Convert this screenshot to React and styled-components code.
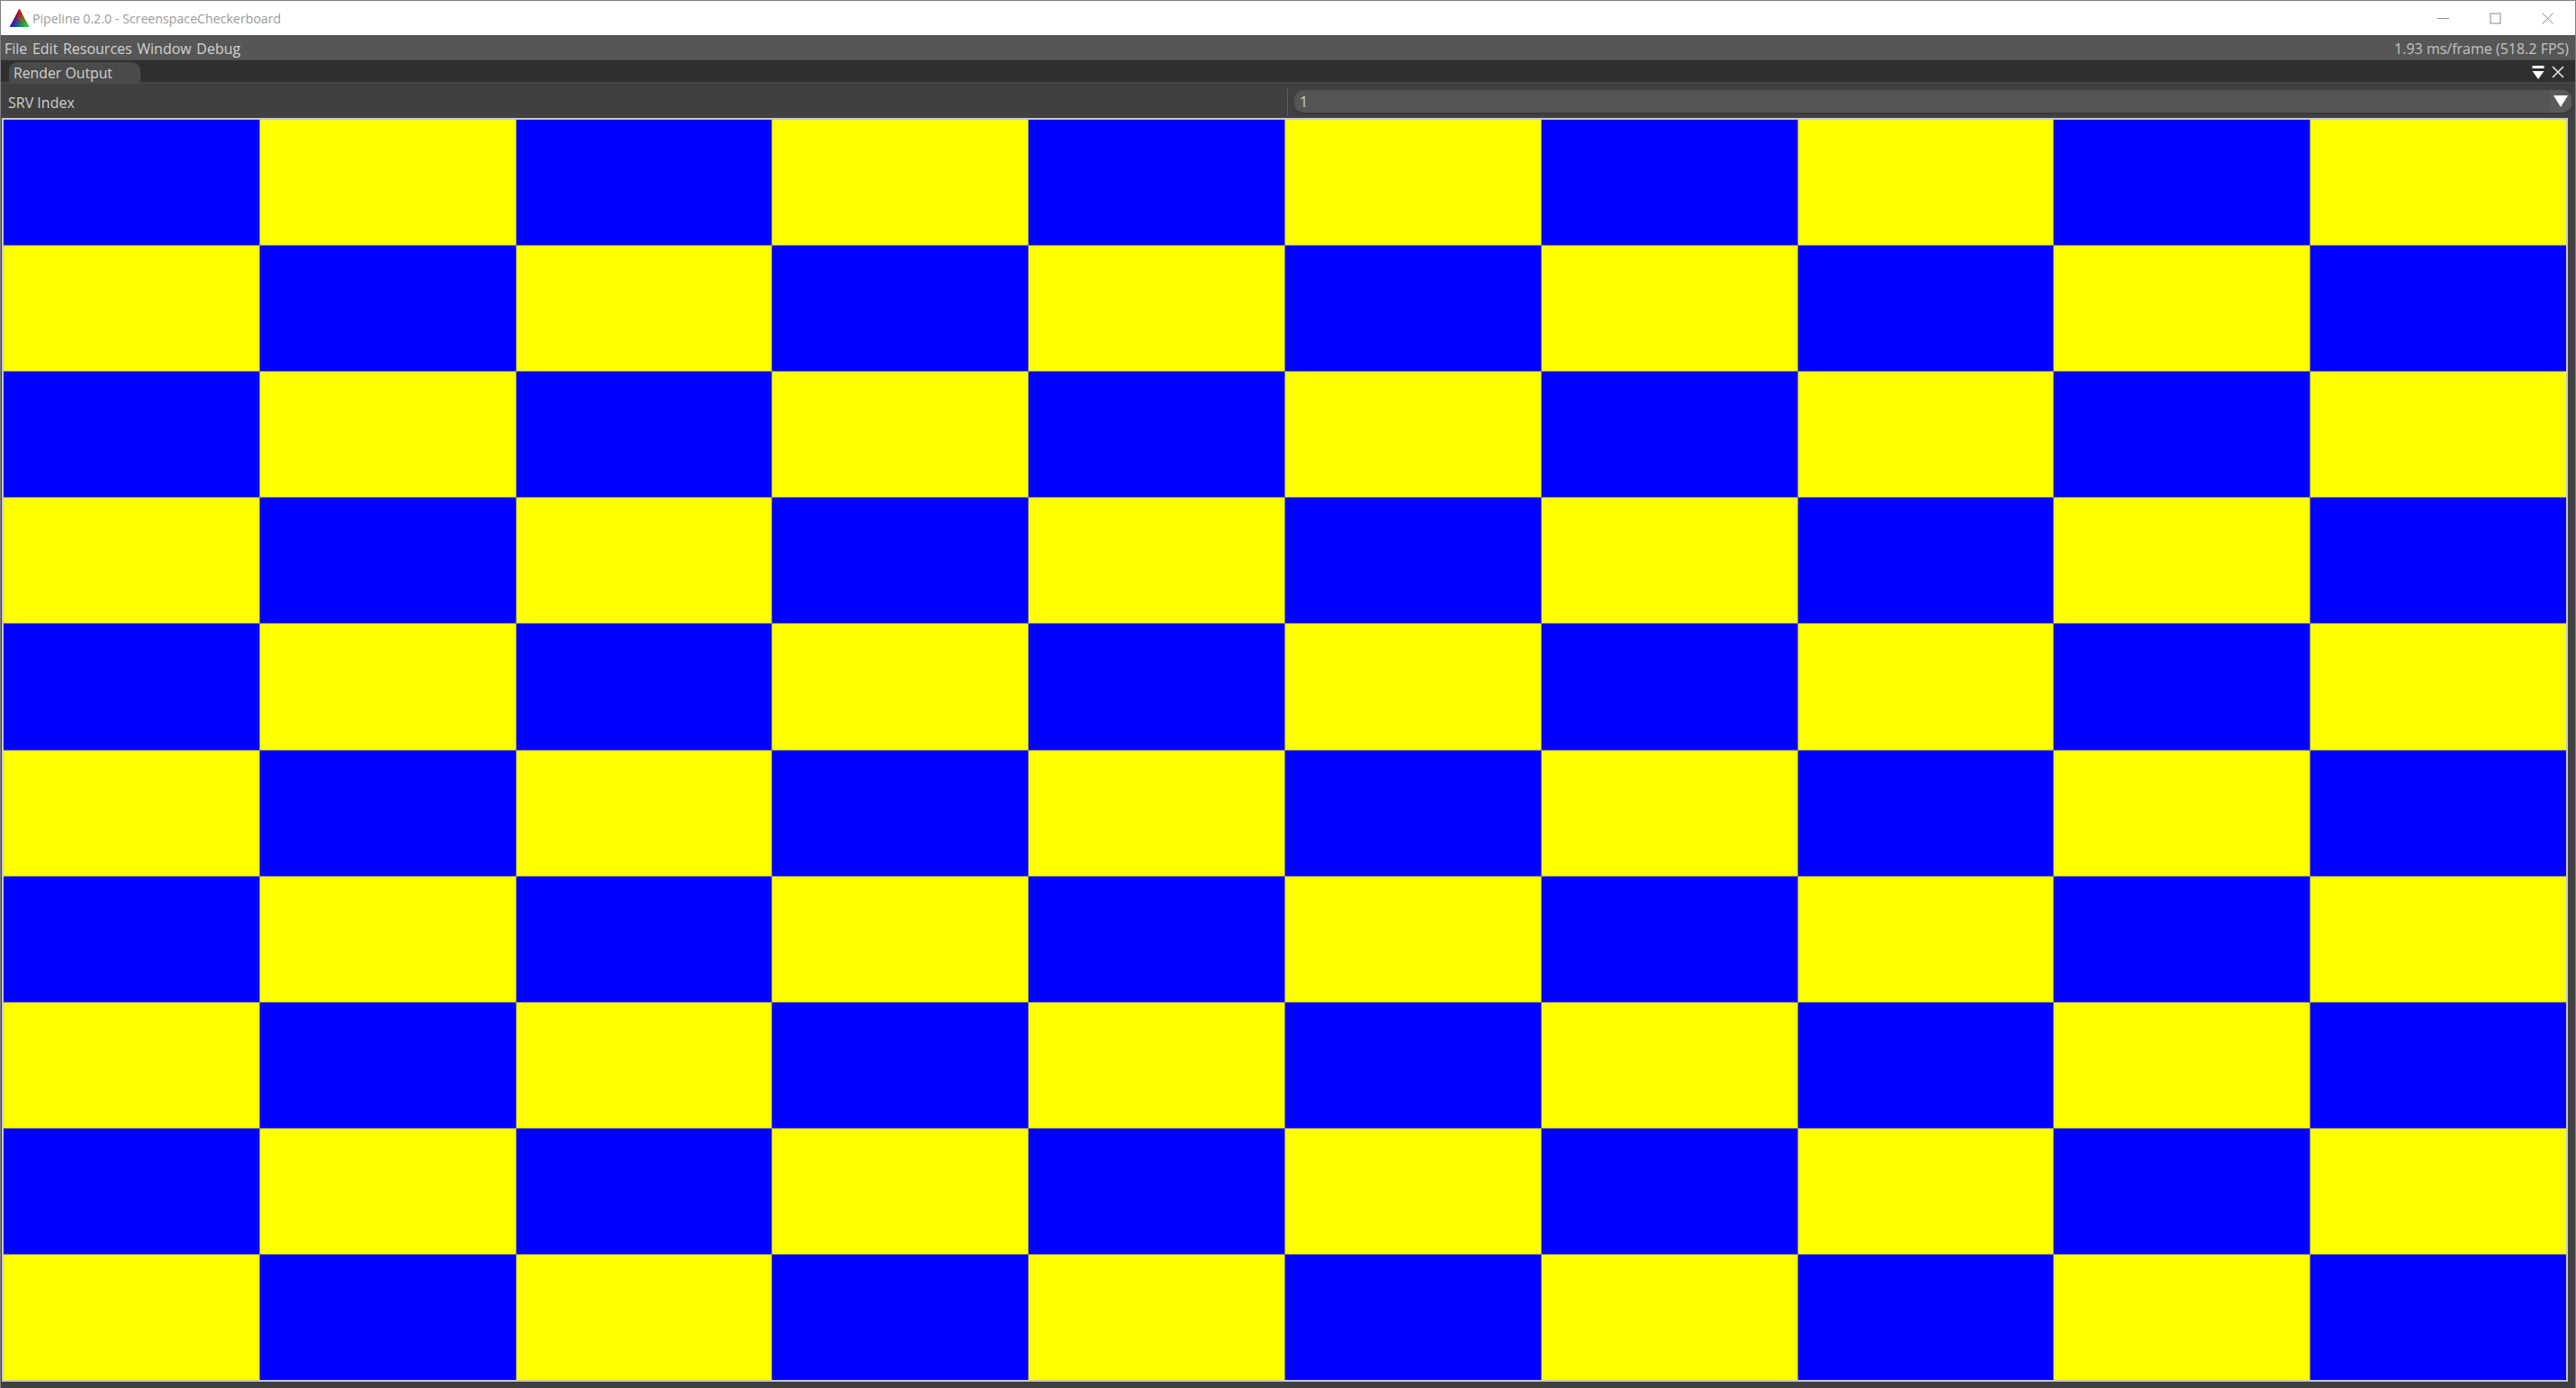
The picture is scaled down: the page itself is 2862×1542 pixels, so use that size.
import React from "react";
import styled, { createGlobalStyle } from "styled-components";

const Global = createGlobalStyle`
  html, body { margin: 0; padding: 0; background: #404040; overflow: hidden; }
  * { box-sizing: border-box; }
`;

const Win = styled.div`
  width: 2862px;
  height: 1542px;
  display: flex;
  flex-direction: column;
  background: #404040;
  border: 1px solid #7f7f7f;
  border-bottom: none;
  font-family: "Open Sans", "Noto Sans", sans-serif;
  overflow: hidden;
`;
const TitleBar = styled.div`
  height: 38px;
  flex: none;
  background: #fff;
  display: flex;
  align-items: center;
  padding-left: 10px;
`;
const AppTitle = styled.span`
  margin-left: 4px;
  font-size: 14.2px;
  color: #9a9a9a;
  flex: 1;
`;
const WinButtons = styled.div`
  display: flex;
  align-items: center;
  gap: 45px;
  padding-right: 24px;
`;
const MenuBar = styled.div`
  height: 28px;
  flex: none;
  background: #565656;
  border-bottom: 1px solid #4b4f52;
  display: flex;
  align-items: center;
  padding: 2px 7px 0 4px;
  color: #d2d2d2;
  font-size: 16px;
`;
const MenuItem = styled.span`
  margin-right: 5.6px;
`;
const Fps = styled.span`
  margin-left: auto;
  color: #c4c4c4;
`;
const TabBar = styled.div`
  height: 26px;
  flex: none;
  background: #2f2f2f;
  border-bottom: 2px solid #464646;
  display: flex;
  align-items: flex-end;
  padding: 0 12px 0 9px;
`;
const Tab = styled.div`
  width: 146px;
  height: 24px;
  background: #4a4a4a;
  border-radius: 9px 9px 0 0;
  color: #d2d2d2;
  font-size: 15.8px;
  line-height: 24px;
  padding-left: 5px;
  margin-bottom: -2px;
`;
const TabIcons = styled.div`
  margin-left: auto;
  display: flex;
  align-items: center;
  gap: 8px;
  align-self: center;
  padding-top: 2px;
`;
const ControlRow = styled.div`
  height: 38px;
  flex: none;
  display: flex;
  align-items: center;
  background: #404040;
  padding-top: 3px;
`;
const Label = styled.div`
  width: 1429px;
  padding-left: 8px;
  color: #d2d2d2;
  font-size: 16px;
  flex: none;
`;
const Divider = styled.div`
  width: 1px;
  height: 31px;
  background: #5e5e5e;
  flex: none;
`;
const Select = styled.div`
  margin-left: 7px;
  margin-right: 4px;
  flex: 1;
  height: 27px;
  background: #555;
  border-bottom: 2px solid #393939;
  border-radius: 11px;
  display: flex;
  align-items: center;
  overflow: hidden;
  color: #d2d2d2;
  font-size: 16px;
  padding-left: 6px;
`;
const SelectValue = styled.span`
  flex: 1;
`;
const SelectArrow = styled.div`
  width: 24px;
  height: 100%;
  background: #5a5a5a;
  display: flex;
  align-items: center;
  justify-content: center;
`;
const Frame = styled.div`
  margin: 0 8px 0 1px;
  height: 1404px;
  border: 2px solid #c9c9c9;
  flex: none;
`;
const Board = styled.div`
  height: 100%;
  display: grid;
  grid-template-columns: repeat(10, 1fr);
  grid-template-rows: repeat(10, 1fr);
  gap: 1px;
  background: #808080;
`;
const Cell = styled.div`
  background: ${(p) => (p.$odd ? "#ffff00" : "#0000ff")};
`;

const Logo = () => (
  <svg width="21" height="20" viewBox="0 0 21 20" style={{ isolation: "isolate" }}>
    <defs>
      <linearGradient id="r" x1="10.5" y1="0" x2="10.5" y2="20" gradientUnits="userSpaceOnUse">
        <stop offset="0" stopColor="#ff0000" />
        <stop offset="1" stopColor="#000" />
      </linearGradient>
      <linearGradient id="g" x1="21" y1="20" x2="5" y2="10" gradientUnits="userSpaceOnUse">
        <stop offset="0" stopColor="#00ff00" />
        <stop offset="1" stopColor="#000" />
      </linearGradient>
      <linearGradient id="b" x1="0" y1="20" x2="16" y2="10" gradientUnits="userSpaceOnUse">
        <stop offset="0" stopColor="#0000ff" />
        <stop offset="1" stopColor="#000" />
      </linearGradient>
    </defs>
    <polygon points="10.5,0 21,20 0,20" fill="url(#r)" />
    <polygon points="10.5,0 21,20 0,20" fill="url(#g)" style={{ mixBlendMode: "screen" }} />
    <polygon points="10.5,0 21,20 0,20" fill="url(#b)" style={{ mixBlendMode: "screen" }} />
  </svg>
);

const MinIcon = () => (
  <svg width="13" height="13" viewBox="0 0 13 13">
    <path d="M0 6.5H13" stroke="#8a8a8a" />
  </svg>
);
const MaxIcon = () => (
  <svg width="13" height="13" viewBox="0 0 13 13">
    <rect x="1" y="1" width="11" height="11" fill="none" stroke="#8a8a8a" />
  </svg>
);
const CloseIcon = () => (
  <svg width="13" height="13" viewBox="0 0 13 13">
    <path d="M0.5 0.5L12.5 12.5M12.5 0.5L0.5 12.5" stroke="#8a8a8a" />
  </svg>
);
const CollapseIcon = () => (
  <svg width="14" height="15" viewBox="0 0 14 15">
    <rect x="0.5" y="0" width="13" height="3" fill="#fff" />
    <polygon points="0.5,6 13.5,6 7,15" fill="#fff" />
  </svg>
);
const TabCloseIcon = () => (
  <svg width="14" height="14" viewBox="0 0 14 14">
    <path d="M1 1L13 13M13 1L1 13" stroke="#e6e6e6" strokeWidth="1.6" />
  </svg>
);
const ArrowIcon = () => (
  <svg width="16" height="13" viewBox="0 0 16 13">
    <polygon points="0,0 16,0 8,13" fill="#fff" />
  </svg>
);

const menus = ["File", "Edit", "Resources", "Window", "Debug"];
const cells = Array.from({ length: 100 }, (_, i) => (Math.floor(i / 10) + (i % 10)) % 2 === 1);

export default function App() {
  return (
    <Win>
      <Global />
      <TitleBar>
        <Logo />
        <AppTitle>Pipeline 0.2.0 - ScreenspaceCheckerboard</AppTitle>
        <WinButtons>
          <MinIcon />
          <MaxIcon />
          <CloseIcon />
        </WinButtons>
      </TitleBar>
      <MenuBar>
        {menus.map((m) => (
          <MenuItem key={m}>{m}</MenuItem>
        ))}
        <Fps>1.93 ms/frame (518.2 FPS)</Fps>
      </MenuBar>
      <TabBar>
        <Tab>Render Output</Tab>
        <TabIcons>
          <CollapseIcon />
          <TabCloseIcon />
        </TabIcons>
      </TabBar>
      <ControlRow>
        <Label>SRV Index</Label>
        <Divider />
        <Select>
          <SelectValue>1</SelectValue>
          <SelectArrow>
            <ArrowIcon />
          </SelectArrow>
        </Select>
      </ControlRow>
      <Frame>
        <Board>
          {cells.map((odd, i) => (
            <Cell key={i} $odd={odd} />
          ))}
        </Board>
      </Frame>
    </Win>
  );
}
